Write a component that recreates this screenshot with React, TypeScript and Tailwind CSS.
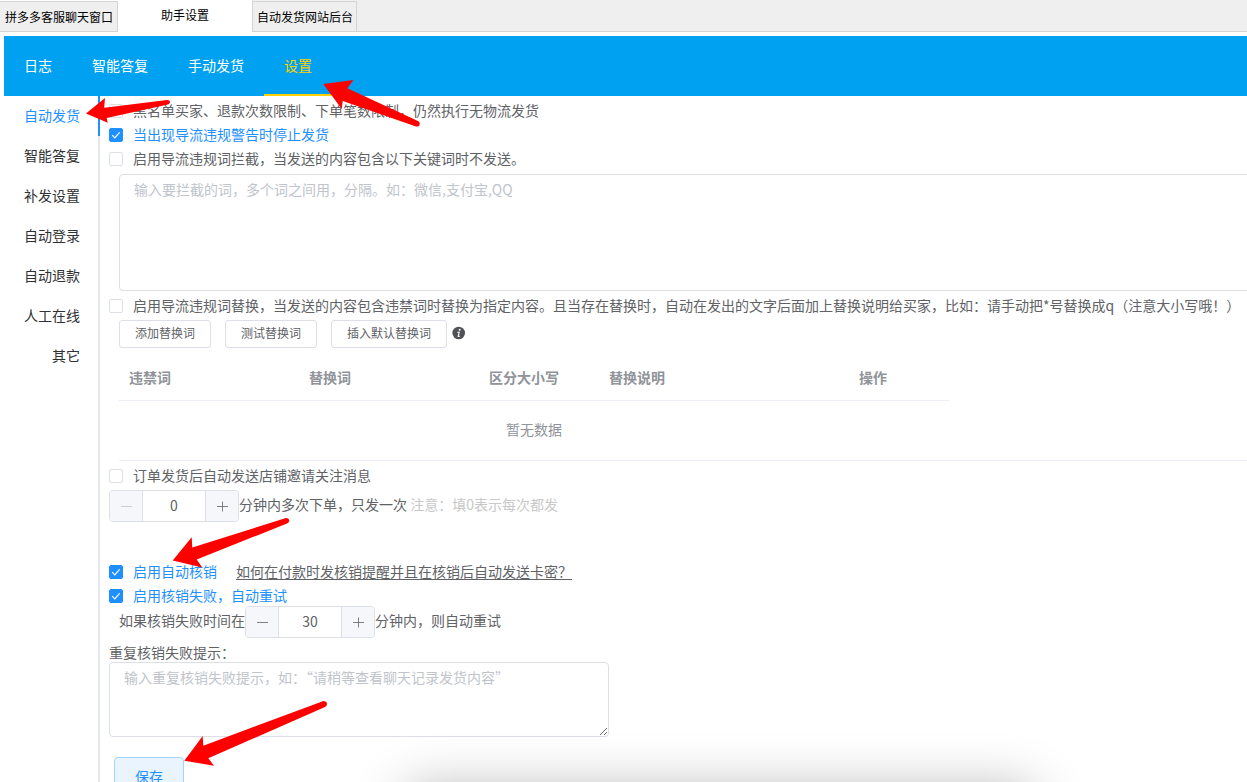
import React from "react";

const menus = ["日志", "智能答复", "手动发货", "设置"];

const sideItems = ["自动发货", "智能答复", "补发设置", "自动登录", "自动退款", "人工在线", "其它"];

const columns = [
  { title: "违禁词", width: "w-[180px]" },
  { title: "替换词", width: "w-[180px]" },
  { title: "区分大小写", width: "w-[120px]" },
  { title: "替换说明", width: "w-[250px]" },
  { title: "操作", width: "w-[100px]" },
];

function CheckRow({ text, checked = false }: { text: string; checked?: boolean }) {
  return (
    <label className="flex h-6 items-center gap-2.5 whitespace-nowrap text-[#606266] has-checked:text-[#1e90ff]">
      <span className="relative flex size-3.5 shrink-0">
        <input
          type="checkbox"
          defaultChecked={checked}
          className="peer size-3.5 appearance-none rounded-xs border border-[#dcdfe6] bg-white checked:border-[#1e90ff] checked:bg-[#1e90ff]"
        />
        <svg
          viewBox="0 0 14 14"
          className="pointer-events-none absolute inset-0 hidden size-3.5 peer-checked:block"
          fill="none"
          stroke="#fff"
          strokeWidth="1.2"
        >
          <path d="M3.2 7.2 5.8 9.8 10.6 4.4" />
        </svg>
      </span>
      <span className="pb-0.5">{text}</span>
    </label>
  );
}

function NumberInput({ value, label, minDisabled = false }: { value: string; label: string; minDisabled?: boolean }) {
  return (
    <div className="flex h-8 w-[130px] shrink-0 overflow-hidden rounded-sm border border-[#dcdfe6] bg-white">
      <button
        type="button"
        aria-label="减少"
        disabled={minDisabled}
        className="flex w-[33px] shrink-0 items-center justify-center border-r border-[#dcdfe6] bg-[#f5f7fa] text-[#606266] disabled:text-[#c0c4cc]"
      >
        <svg viewBox="0 0 12 12" className="size-3" stroke="currentColor" strokeWidth="0.8">
          <path d="M1 6.500h11" />
        </svg>
      </button>
      <input
        type="text"
        inputMode="numeric"
        aria-label={label}
        defaultValue={value}
        className="w-full min-w-0 flex-1 pb-0.5 text-center text-[#606266] outline-none"
      />
      <button
        type="button"
        aria-label="增加"
        className="flex w-[33px] shrink-0 items-center justify-center border-l border-[#dcdfe6] bg-[#f5f7fa] text-[#606266]"
      >
        <svg viewBox="0 0 12 12" className="size-3" stroke="currentColor" strokeWidth="0.8">
          <path d="M1 6.500h11M6.500 1.500v10" />
        </svg>
      </button>
    </div>
  );
}

function SmallButton({ children }: { children: React.ReactNode }) {
  return (
    <button type="button" className="h-7 rounded-[3px] border border-[#dcdfe6] bg-white px-[15px] pb-0.5 text-xs text-[#606266]">
      {children}
    </button>
  );
}

export default function App() {
  return (
    <div
      lang="zh-CN"
      className="relative flex h-screen flex-col overflow-hidden bg-white font-['Noto_Sans_CJK_SC',sans-serif] text-sm text-[#606266]"
    >
      {/* Window tabs */}
      <div className="flex h-8 shrink-0 text-xs text-black">
        <button type="button" className="mt-px border-y border-r border-[#d4d4d4] bg-[#efefef] pr-1 pl-[5px]">
          拼多多客服聊天窗口
        </button>
        <button type="button" className="w-[134px] pb-0.5">
          助手设置
        </button>
        <div className="flex flex-1 border-b border-[#d4d4d4] bg-[#efefef]">
          <button type="button" className="mt-px border-x border-t border-[#d4d4d4] pr-[3px] pl-1">
            自动发货网站后台
          </button>
        </div>
      </div>

      {/* Top menu */}
      <nav className="mt-1 ml-1 flex h-15 shrink-0 bg-[#00a1f1]">
        {menus.map((item) => (
          <a
            key={item}
            href="#"
            className={
              item === "设置"
                ? "flex items-center border-b-2 border-[#ffd000] px-5 text-[#ffd000]"
                : "flex items-center border-b-2 border-transparent px-5 text-white"
            }
          >
            {item}
          </a>
        ))}
      </nav>

      <div className="ml-1 flex min-h-0 flex-1">
        {/* Side tabs */}
        <nav className="flex w-24 shrink-0 flex-col bg-[linear-gradient(#e4e7ed,#e4e7ed)] bg-[length:2px_100%] bg-right bg-no-repeat">
          {sideItems.map((item, i) => (
            <a
              key={item}
              href="#"
              className={
                i === 0
                  ? "flex h-10 items-center justify-end border-r-2 border-[#1e90ff] pr-[18px] pb-0.5 text-[#1e90ff]"
                  : "flex h-10 items-center justify-end border-r-2 border-transparent pr-[18px] pb-0.5 text-[#303133]"
              }
            >
              {item}
            </a>
          ))}
        </nav>

        {/* Settings */}
        <main className="min-w-0 flex-1 overflow-hidden pt-[3px] pl-[9px]">
          <CheckRow text="黑名单买家、退款次数限制、下单笔数限制，仍然执行无物流发货" />
          <CheckRow text="当出现导流违规警告时停止发货" checked />
          <CheckRow text="启用导流违规词拦截，当发送的内容包含以下关键词时不发送。" />
          <div className="mt-[3px] -mr-5 ml-2.5">
            <textarea
              aria-label="拦截词"
              placeholder="输入要拦截的词，多个词之间用，分隔。如：微信,支付宝,QQ"
              className="block h-[117px] w-full rounded-sm border border-[#dcdfe6] px-3.5 py-1 leading-[21px] placeholder:text-[#c0c4cc]"
            />
          </div>

          <div className="mt-[3px]">
            <CheckRow text="启用导流违规词替换，当发送的内容包含违禁词时替换为指定内容。且当存在替换时，自动在发出的文字后面加上替换说明给买家，比如：请手动把*号替换成q（注意大小写哦！）" />
          </div>
          <div className="mt-0.5 ml-2.5 flex gap-3.5">
            <SmallButton>添加替换词</SmallButton>
            <SmallButton>测试替换词</SmallButton>
            <div className="flex gap-[5px]">
              <SmallButton>插入默认替换词</SmallButton>
              <svg viewBox="0 0 14 14" className="mt-1.5 size-3.5">
                <circle cx="6.700" cy="7" r="6.300" fill="#505255" />
                <circle cx="7.700" cy="3.700" r="1" fill="#fff" />
                <path d="M5.300 6.200h1.900L6.200 10.400h1.500" fill="none" stroke="#fff" strokeWidth="1.100" />
              </svg>
            </div>
          </div>

          <div className="mt-1.5 ml-2.5 border-b border-[#ebeef5]">
            <table className="w-[830px] table-fixed border-collapse text-[#909399]">
              <thead>
                <tr className="h-[46px] border-b border-[#ebeef5]">
                  {columns.map((col) => (
                    <th key={col.title} className={`${col.width} px-2.5 text-left font-bold`}>
                      {col.title}
                    </th>
                  ))}
                </tr>
              </thead>
              <tbody>
                <tr className="h-[60px]">
                  <td colSpan={5} className="pb-0.5 text-center">
                    暂无数据
                  </td>
                </tr>
              </tbody>
            </table>
          </div>

          <div className="mt-[3px]">
            <CheckRow text="订单发货后自动发送店铺邀请关注消息" />
          </div>
          <div className="mt-0.5 flex items-center">
            <NumberInput value="0" label="分钟内多次下单" minDisabled />
            <span className="pb-1">
              分钟内多次下单，只发一次 <span className="text-[#c8c8c8]">注意：填0表示每次都发</span>
            </span>
          </div>

          <div className="mt-[38px] flex gap-[19px]">
            <CheckRow text="启用自动核销" checked />
            <a href="#" className="pb-0.5 leading-[22px] underline underline-offset-2">
              如何在付款时发核销提醒并且在核销后自动发送卡密？
            </a>
          </div>
          <CheckRow text="启用核销失败，自动重试" checked />
          <div className="-mt-0.5 ml-2.5 flex items-center">
            <span className="pb-1">如果核销失败时间在</span>
            <NumberInput value="30" label="自动重试分钟数" />
            <span className="pb-1">分钟内，则自动重试</span>
          </div>
          <label htmlFor="repeat-tip" className="mt-1 block leading-5">
            重复核销失败提示：
          </label>
          <textarea
            id="repeat-tip"
            placeholder="输入重复核销失败提示，如：“请稍等查看聊天记录发货内容”"
            className="block h-[75px] w-[500px] resize-y rounded-sm border border-[#dcdfe6] px-3.5 py-1 leading-[21px] placeholder:text-[#c0c4cc]"
          />
          <button
            type="button"
            className="mt-5 ml-[5px] h-10 rounded-sm border border-[#a5d3ff] bg-[#e9f4ff] px-5 pb-0.5 text-[#1e90ff]"
          >
            保存
          </button>
        </main>
      </div>

      {/* Popup waiting below the fold, only its shadow shows */}
      <div className="absolute top-full left-[407px] mt-2 h-40 w-[626px] shadow-[0_0_50px_rgba(0,0,0,0.3)]" />

      {/* Arrows */}
      <svg className="pointer-events-none absolute inset-0 size-full" fill="#f00">
        <path d="M86 113.500 105 98 104.200 107.800 167 100Q170 100 170 102.300 170 104 167 104.700L106.700 118 107.700 122.700Z" />
        <path d="M323.300 84 353.500 80 347.300 88.300 418.500 121.300Q420.500 123 419.500 125.300 418.500 127 416 126.500L342.700 101 341.700 109Z" />
        <path d="M172.700 560.500 191.700 537.300 192.300 547.500 286 518Q289 518 289.300 520.500 289.300 522.500 287 523.500L196.700 559.500 202.300 567.500Z" />
        <path d="M184.300 760.700 202.700 736 203.300 745.700 323.500 701Q326.500 701 327 703.700 327 706 325 707L208.300 758.300 214 765.700Z" />
      </svg>
    </div>
  );
}
